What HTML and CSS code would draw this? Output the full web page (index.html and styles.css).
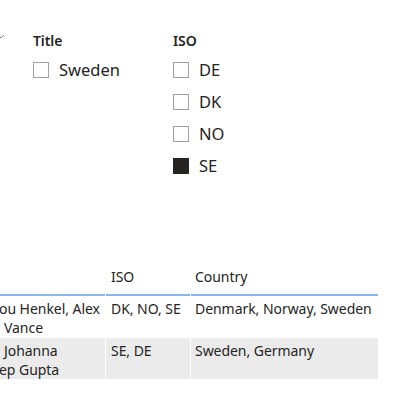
FILE: index.html
```html
<!DOCTYPE html>
<html>
<head>
<meta charset="utf-8">
<link rel="stylesheet" href="styles.css">
</head>
<body>
<div class="page">
  <div class="chev"><svg width="6" height="8" viewBox="0 0 6 8"><polyline points="-2,2 1,5 4,2" fill="none" stroke="#8a8886" stroke-width="1"/></svg></div>
  <div class="slicers">
    <div class="slicer s-title">
      <div class="s-head">Title</div>
      <div class="item"><span class="box"></span><span class="lbl">Sweden</span></div>
    </div>
    <div class="slicer s-iso">
      <div class="s-head">ISO</div>
      <div class="item"><span class="box"></span><span class="lbl">DE</span></div>
      <div class="item"><span class="box"></span><span class="lbl">DK</span></div>
      <div class="item"><span class="box"></span><span class="lbl">NO</span></div>
      <div class="item"><span class="box on"></span><span class="lbl">SE</span></div>
    </div>
  </div>
  <div class="table">
    <div class="row head">
      <div class="c c1"></div>
      <div class="c c2">ISO</div>
      <div class="c c3">Country</div>
    </div>
    <div class="row r1">
      <div class="c c1"><span class="ln a">ou Henkel, Alex</span><span class="ln b">Vance</span></div>
      <div class="c c2">DK, NO, SE</div>
      <div class="c c3">Denmark, Norway, Sweden</div>
    </div>
    <div class="row r2">
      <div class="c c1"><span class="ln b">Johanna</span><span class="ln a">ep Gupta</span></div>
      <div class="c c2">SE, DE</div>
      <div class="c c3">Sweden, Germany</div>
    </div>
  </div>
</div>
</body>
</html>
```
FILE: styles.css
```css
html, body {
  margin: 0;
  padding: 0;
  background: #ffffff;
}
body {
  font-family: "Noto Sans", "Open Sans", sans-serif;
  color: #252423;
  width: 417px;
  height: 405px;
  overflow: hidden;
}
.page {
  position: relative;
  padding-top: 31px;
}
.chev {
  position: absolute;
  left: 0;
  top: 33px;
  line-height: 0;
}
.slicers {
  display: flex;
  padding-left: 33px;
  height: 231px;
}
.slicer {
  display: flex;
  flex-direction: column;
}
.s-title {
  width: 140px;
}
.s-head {
  font-size: 14px;
  font-weight: 600;
  line-height: 20px;
  height: 20px;
  margin-bottom: 10px;
  letter-spacing: -0.1px;
}
.item {
  display: flex;
  align-items: center;
  height: 32px;
  margin-top: -7px;
  margin-bottom: 7px;
}
.item:first-of-type {
  margin-top: 0;
}
.box {
  width: 14px;
  height: 14px;
  border: 1px solid #a19f9d;
  background: #ffffff;
  flex: none;
}
.box.on {
  background: #252423;
  border-color: #252423;
}
.lbl {
  margin-left: 10px;
  font-size: 16.5px;
  line-height: 20px;
  letter-spacing: 0;
}
.table {
  width: 378px;
  font-size: 14px;
  line-height: 19px;
  letter-spacing: -0.05px;
}
.row {
  display: flex;
}
.c {
  box-sizing: border-box;
  overflow: hidden;
  white-space: nowrap;
}
.c1 { width: 105px; }
.c2 { width: 84px; margin-left: 1px; padding-left: 5px; }
.c3 { width: 187px; margin-left: 1px; padding-left: 4px; }
.head {
  height: 34px;
  align-items: flex-start;
}
.head .c {
  height: 34px;
  padding-top: 5px;
  border-bottom: 2px solid #86b6ec;
}
.r1 .c {
  height: 40px;
  margin-top: 1px;
  padding-top: 2px;
  background: #ffffff;
}
.r2 {
  margin-top: 1px;
}
.r2 .c {
  height: 41px;
  padding-top: 3px;
  background: #ebebeb;
}
.ln {
  display: block;
}
.ln.a { margin-left: -1px; }
.ln.b { margin-left: 4px; }
```
